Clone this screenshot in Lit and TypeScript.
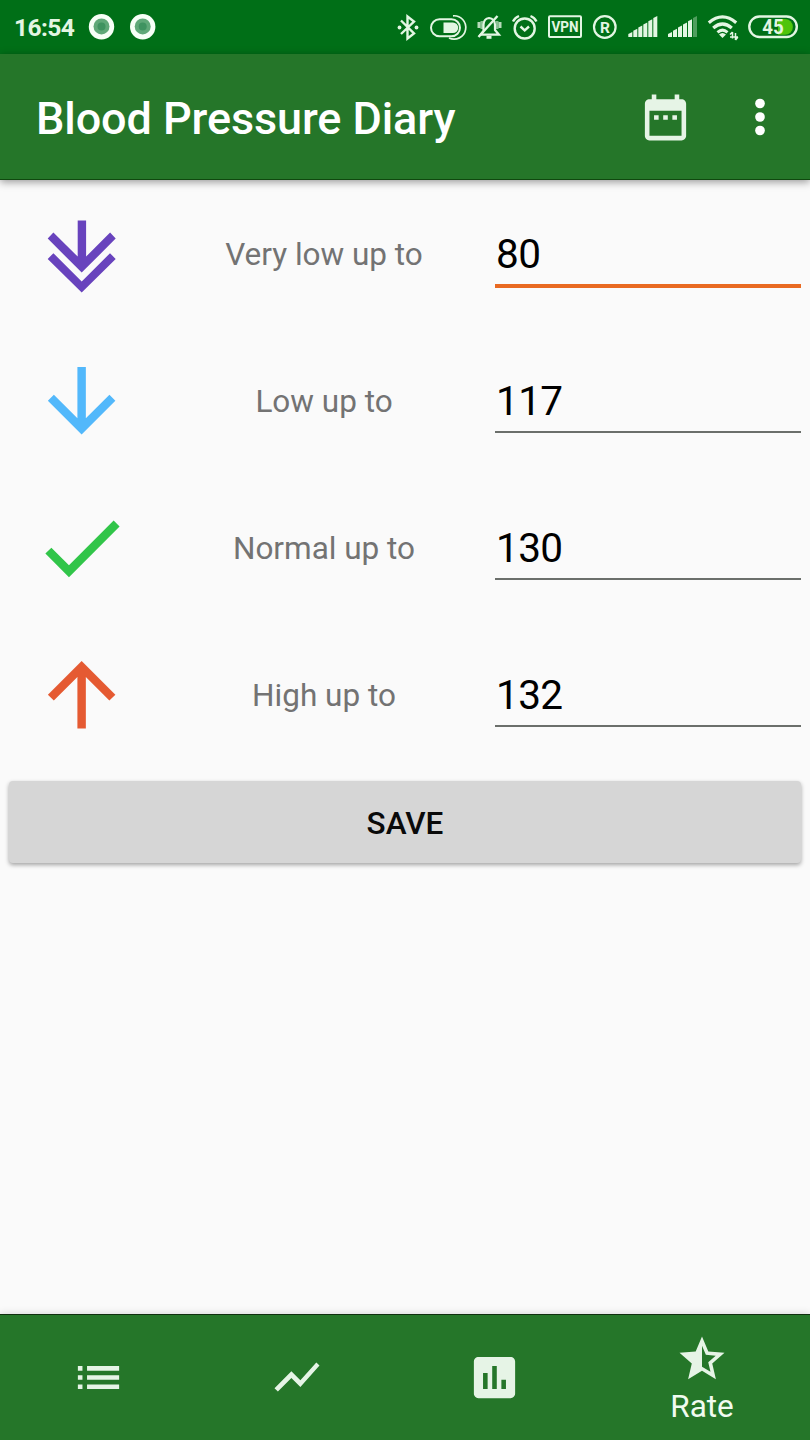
import { LitElement, html, css, svg } from "lit";
import { customElement } from "lit/decorators.js";

const bars = (x: number, dimLast: boolean) =>
  [0, 1, 2, 3, 4, 5].map((i) => {
    const left = x + i * 5;
    const right = left + 4;
    const h = 3 + i * 3.2;
    return svg`<polygon points="${left},37 ${left},${37 - h} ${right},${35 - h} ${right},37" fill="#e3f6e3" opacity=${dimLast && i === 5 ? 0.35 : 1} />`;
  });

@customElement("status-bar")
class StatusBar extends LitElement {
  static styles = css`
    :host {
      display: flex;
      height: 54px;
      box-sizing: border-box;
      padding: 0 6px 0 14px;
      background: #006f17;
      color: #e3f6e3;
      align-items: stretch;
    }
    .time {
      font: 700 24.5px/54px Roboto, sans-serif;
      width: 68px;
      letter-spacing: -0.6px;
      padding-top: 1px;
      box-sizing: border-box;
    }
    .spacer { flex: 1; }
    svg { display: block; fill: none; stroke: #e3f6e3; stroke-width: 2.4; }
    text { font-family: Roboto, sans-serif; font-weight: 700; fill: #e3f6e3; stroke: none; }
    .solid { fill: #e3f6e3; stroke: none; }
  `;
  render() {
    return html`
      <div class="time">16:54</div>
      <svg width="78" height="54" viewBox="82 0 78 54">
        ${[101.5, 142.7].map(
          (x) => svg`<g stroke="none"><circle cx=${x} cy="26.7" r="12.7" fill="#f7fff7" /><circle cx=${x} cy="26.4" r="8" fill="#5fa878" /><circle cx=${x} cy="26.4" r="4" fill="#3f9360" /></g>`
        )}
      </svg>
      <div class="spacer"></div>
      <svg width="32" height="54" viewBox="392 0 32 54">
        <path d="M401 20.5L414 33.5L407.5 38.500V16.500L414 21.500L401 34" />
        <circle class="solid" cx="399.500" cy="27.500" r="1.900" /><circle class="solid" cx="416.500" cy="27.500" r="1.900" />
      </svg>
      <svg width="46" height="54" viewBox="424 0 46 54">
        <rect x="431" y="19.200" width="29" height="17" rx="8.500" stroke-width="2" />
        <path class="solid" d="M443.500 22.500H453a5.200 5.200 0 0 1 0 10.400H443.500z" />
        <path d="M453 15.800A11.700 11.700 0 1 1 449 38" stroke-width="1.700" />
      </svg>
      <svg width="38" height="54" viewBox="470 0 38 54">
        <path d="M483.500 31V24.500Q484 18.500 489 18Q494.500 18.500 495 24.500V30L499 34.700H480.500L483.500 31" stroke-width="2.200" />
        <path d="M478.500 37L497.500 16" />
        <path d="M486.500 37.300H491.500" stroke-width="3" />
        <path d="M479 22V28M500 22V28" stroke-width="3" opacity="0.800" />
        <path d="M482 21V29M497 21V29" stroke-width="3" opacity="0.600" />
      </svg>
      <svg width="34" height="54" viewBox="508 0 34 54">
        <circle cx="524.700" cy="28.500" r="10" />
        <path d="M520.500 26.500L524.700 30.300L529 26.500" />
        <path d="M513 21.500Q515 17.500 519 16M530.500 16Q534.500 17.500 536.500 21.500" />
      </svg>
      <svg width="46" height="54" viewBox="542 0 46 54">
        <rect x="549" y="16.300" width="32" height="20.800" rx="1" stroke-width="2" />
        <text x="565" y="32" font-size="14" text-anchor="middle" textLength="27" lengthAdjust="spacingAndGlyphs">VPN</text>
      </svg>
      <svg width="34" height="54" viewBox="588 0 34 54">
        <circle cx="604.800" cy="27" r="10.800" stroke-width="2.200" />
        <text x="605" y="32.500" font-size="15.500" text-anchor="middle">R</text>
      </svg>
      <svg width="40" height="54" viewBox="622 0 40 54"><g stroke="none">${bars(628.3, false)}</g></svg>
      <svg width="40" height="54" viewBox="662 0 40 54"><g stroke="none">${bars(668, true)}</g></svg>
      <svg width="41" height="54" viewBox="702 0 41 54">
        <path d="M708.800 22.800Q722.500 11 736.200 22.800" stroke-width="3.200" />
        <path d="M713.200 28Q722.500 20 731.800 28" stroke-width="3.200" />
        <path d="M717.500 32.300Q722.500 28 727.500 32.300" stroke-width="3" />
        <path class="solid" d="M719 34.500Q722.500 31.500 726 34.500L722.500 38z" />
        <path d="M732.500 32V38.500M735.500 33V40M730 34.500L732.500 32M738 37L735.500 40M730 37H738" stroke-width="1.500" />
      </svg>
      <svg width="61" height="54" viewBox="743 0 61 54">
        <path d="M778 19H785a7.800 7.800 0 0 1 0 15.800H778z" fill="#4fc40c" stroke="none" />
        <rect x="749.300" y="16.500" width="47.500" height="20.500" rx="10.200" />
        <text x="773" y="34" font-size="20" text-anchor="middle" textLength="21.500" lengthAdjust="spacingAndGlyphs">45</text>
      </svg>
    `;
  }
}

@customElement("range-row")
class RangeRow extends LitElement {
  static properties = {
    label: {},
    value: {},
    icon: { attribute: false },
    active: { type: Boolean },
  };
  declare label: string;
  declare value: string;
  declare icon: unknown;
  declare active: boolean;
  static styles = css`
    :host {
      display: grid;
      grid-template-columns: 1fr 2fr 2fr;
      height: 147px;
      align-items: center;
      font-family: Roboto, sans-serif;
    }
    .icon { display: flex; justify-content: center; padding: 0 0 4px 1px; }
    .label { text-align: center; font-size: 31.5px; line-height: 38px; padding-bottom: 1px; color: #737373; }
    .field {
      align-self: start;
      box-sizing: border-box;
      height: 59px;
      margin: 45px 9px 0;
      padding: 3px 0 0 1px;
      font-size: 40.5px;
      line-height: 48px;
      letter-spacing: -0.6px;
      color: #000;
      border-bottom: 2px solid #6b6f6b;
      margin-top: 45px;
    }
    .active { border-bottom: 4px solid #e96a22; height: 61px; }
  `;
  render() {
    return html`
      <div class="icon">
        <svg width="101.25" height="101.25" viewBox="0 0 24 24">${this.icon}</svg>
      </div>
      <div class="label">${this.label}</div>
      <div class="field ${this.active ? "active" : ""}">${this.value}</div>
    `;
  }
}

const rows = [
  {
    label: "Very low up to",
    value: "80",
    icon: svg`<g fill="#6843bd" transform="scale(.23704) translate(-30.6 -202.4)"><path d="M77.300 220H85.700V256L109.700 232L115.300 238L81.300 272L47.300 238L53 232L77.300 256z" /><path d="M47.300 258.300L53 252.600L81.300 281L109.600 252.600L115.300 258.300L81.300 292z" /></g>`,
  },
  {
    label: "Low up to",
    value: "117",
    icon: svg`<path fill="#52b8fb" d="M20 12l-1.410-1.410L13 16.170V4h-2v12.170l-5.580-5.590L4 12l8 8 8-8z" />`,
  },
  {
    label: "Normal up to",
    value: "130",
    icon: svg`<path fill="#31c549" d="M9 16.170L4.830 12l-1.420 1.410L9 19 21 7l-1.410-1.410z" />`,
  },
  {
    label: "High up to",
    value: "132",
    icon: svg`<path fill="#e55a32" d="M4 12l1.410 1.410L11 7.830V20h2V7.830l5.580 5.590L20 12l-8-8-8 8z" />`,
  },
];

@customElement("app-root")
class AppRoot extends LitElement {
  static styles = css`
    :host {
      display: flex;
      flex-direction: column;
      height: 1440px;
      background: #fafafa;
      font-family: Roboto, sans-serif;
    }
    .bar {
      display: flex;
      align-items: center;
      height: 126px;
      box-sizing: border-box;
      padding: 0 23px 0 36px;
      background: #257629;
      border-bottom: 1px solid #10480f;
      box-shadow: 0 2px 8px rgba(0, 0, 0, 0.4);
    }
    .title { flex: 1; color: #fff; font-size: 45px; line-height: 54px; font-weight: 500; letter-spacing: -0.1px; padding-top: 4px; }
    .calendar { padding-top: 1px; }
    .menu { margin-left: 40px; }
    svg { display: block; fill: #e6f4e6; }
    .menu svg { fill: #fff; }
    .rows { padding-top: 2px; }
    .save {
      margin: 11px 9px 0;
      height: 82px;
      border-radius: 4px;
      background: #d6d6d6;
      box-shadow: 0 2px 4px rgba(0, 0, 0, 0.35);
      text-align: center;
      font-size: 31.5px;
      line-height: 86px;
      font-weight: 500;
      color: #0a0a0a;
    }
    .grow { flex: 1; }
    .nav {
      display: grid;
      grid-template-columns: 198px 198px 198px 216px;
      height: 126px;
      box-sizing: border-box;
      background: #257629;
      border-top: 1px solid #10300f;
      box-shadow: 0 0 8px rgba(0, 0, 0, 0.16);
    }
    .item { display: flex; flex-direction: column; align-items: center; justify-content: center; padding: 0 1px 1px 0; }
    .rate { justify-content: flex-start; padding: 17px 0 0; gap: 2px; color: #f0fbf0; font-size: 31.5px; line-height: 38px; }
  `;
  render() {
    return html`
      <status-bar></status-bar>
      <div class="bar">
        <div class="title">Blood Pressure Diary</div>
        <div class="calendar">
          <svg width="55" height="55" viewBox="0 0 24 24">
            <path d="M9 11H7v2h2v-2zm4 0h-2v2h2v-2zm4 0h-2v2h2v-2zm2-7h-1V2h-2v2H8V2H6v2H5c-1.110 0-1.990.9-1.990 2L3 20c0 1.100.890 2 2 2h14c1.100 0 2-.9 2-2V6c0-1.100-.9-2-2-2zm0 16H5V9h14v11z" />
          </svg>
        </div>
        <div class="menu">
          <svg width="54" height="54" viewBox="0 0 24 24">
            <circle cx="12" cy="6" r="2.150" /><circle cx="12" cy="12" r="2.150" /><circle cx="12" cy="18" r="2.150" />
          </svg>
        </div>
      </div>
      <div class="rows">
        ${rows.map((r, i) => html`<range-row .label=${r.label} .value=${r.value} .icon=${r.icon} .active=${i === 0}></range-row>`)}
      </div>
      <div class="save">SAVE</div>
      <div class="grow"></div>
      <div class="nav">
        <div class="item">
          <svg width="55" height="55" viewBox="0 0 24 24"><path d="M3 13h2v-2H3v2zm0 4h2v-2H3v2zm0-8h2V7H3v2zm4 4h14v-2H7v2zm0 4h14v-2H7v2zM7 7v2h14V7H7z" /></svg>
        </div>
        <div class="item">
          <svg width="54" height="54" viewBox="0 0 24 24"><path d="M3.500 18.490l6-6.010 4 4L22 6.920l-1.410-1.410-7.090 7.970-4-4L2 16.990z" /></svg>
        </div>
        <div class="item">
          <svg width="55" height="55" viewBox="0 0 24 24"><path d="M19 3H5c-1.100 0-2 .9-2 2v14c0 1.100.9 2 2 2h14c1.100 0 2-.9 2-2V5c0-1.100-.9-2-2-2zM9 17H7v-7h2v7zm4 0h-2V7h2v10zm4 0h-2v-4h2v4z" /></svg>
        </div>
        <div class="item rate">
          <svg width="54" height="54" viewBox="0 0 24 24"><path d="M22 9.240l-7.190-.620L12 2 9.190 8.630 2 9.240l5.460 4.730L5.820 21 12 17.270 18.180 21l-1.630-7.030L22 9.240zM12 15.400V6.100l1.710 4.040 4.380.380-3.320 2.880 1 4.280L12 15.400z" /></svg>
          <span>Rate</span>
        </div>
      </div>
    `;
  }
}
